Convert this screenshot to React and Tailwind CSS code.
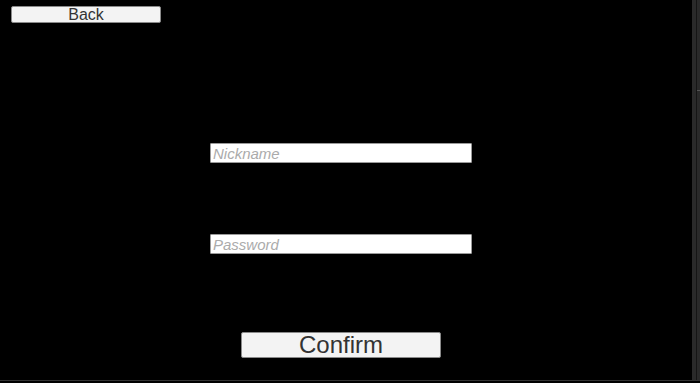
import React from "react";

export default function App() {
  return (
    <div className="w-[700px] h-[383px] bg-black flex flex-col overflow-hidden font-['Liberation_Sans',Arial,sans-serif]">
      <div className="flex flex-1 min-h-0">
        {/* main screen */}
        <div className="flex-1 flex flex-col">
          <div className="pt-[6px] pl-[11px]">
            <button
              type="button"
              className="block w-[150px] h-[17px] bg-[#f3f3f3] border border-[#8a8a8a] rounded-[2px] text-[16px] leading-[15px] text-[#333]"
            >
              Back
            </button>
          </div>

          <div className="ml-[210px] mt-[120px] w-[262px] h-[20px] bg-white border border-[#9a9a9a] rounded-[1px] flex items-center pl-[2px]">
            <span className="text-[15px] italic text-[#ababab] leading-none">Nickname</span>
          </div>

          <div className="ml-[210px] mt-[71px] w-[262px] h-[20px] bg-white border border-[#9a9a9a] rounded-[1px] flex items-center pl-[2px]">
            <span className="text-[15px] italic text-[#ababab] leading-none">Password</span>
          </div>

          <div className="ml-[241px] mt-[78px]">
            <button
              type="button"
              className="block w-[200px] h-[26px] bg-[#f3f3f3] border border-[#8a8a8a] rounded-[2px] text-[24px] leading-[24px] text-[#333]"
            >
              Confirm
            </button>
          </div>
        </div>

        {/* right edge strip */}
        <div className="w-[8px] flex">
          <div className="w-[4px] bg-[#2a2a2a]" />
          <div className="w-[1px] bg-[#151515]" />
          <div className="w-[3px] flex flex-col">
            <div className="h-[90px] bg-[#2a2a2a]" />
            <div className="h-[1px] bg-[#555]" />
            <div className="flex-1 bg-[#2a2a2a]" />
          </div>
        </div>
      </div>
      <div className="h-[1px] bg-[#333]" />
      <div className="h-[2px] bg-black" />
    </div>
  );
}
